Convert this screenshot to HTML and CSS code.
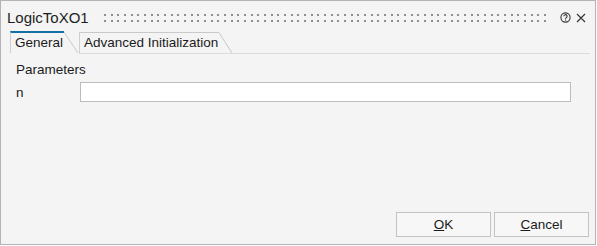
FILE: index.html
```html
<!DOCTYPE html>
<html>
<head>
<meta charset="utf-8">
<link rel="stylesheet" href="styles.css">
</head>
<body>
<div class="window">
  <div class="titlebar">
    <span class="title">LogicToXO1</span>
    <svg class="grip" height="8">
      <defs>
        <pattern id="dots" x="0" y="0" width="20" height="6" patternUnits="userSpaceOnUse">
          <rect x="0" y="0" width="2" height="2" fill="#8e8e8e"/>
          <rect x="7" y="0" width="2" height="2" fill="#8e8e8e"/>
          <rect x="13" y="0" width="2" height="2" fill="#8e8e8e"/>
        </pattern>
      </defs>
      <rect x="0" y="0" width="100%" height="8" fill="url(#dots)"/>
    </svg>
    <svg class="icon help" width="11" height="11" viewBox="0 0 11 11">
      <circle cx="5.5" cy="5.5" r="4.6" fill="none" stroke="#333" stroke-width="1.1"/>
      <path d="M3.9 4.3 a1.6 1.6 0 1 1 2.3 1.4 c-0.5 0.25 -0.7 0.55 -0.7 1.1" fill="none" stroke="#333" stroke-width="1.1"/>
      <rect x="5" y="7.5" width="1.1" height="1.1" fill="#333"/>
    </svg>
    <svg class="icon close" width="10" height="10" viewBox="0 0 10 10">
      <path d="M1 1 L9 9 M9 1 L1 9" stroke="#333" stroke-width="1.1" fill="none"/>
    </svg>
  </div>
  <div class="tabs">
    <div class="tab active">
      <span class="tab-label">General</span>
      <svg class="slant" width="14" height="22" viewBox="0 0 14 22"><line x1="0" y1="1" x2="14" y2="22" stroke="#c9c9c9" stroke-width="1"/></svg>
    </div>
    <div class="tab">
      <span class="tab-label">Advanced Initialization</span>
      <svg class="slant" width="13" height="21" viewBox="0 0 13 21"><line x1="0" y1="0.5" x2="13" y2="21" stroke="#c9c9c9" stroke-width="1"/></svg>
    </div>
    <div class="tab-fill"></div>
  </div>
  <div class="content">
    <div class="section">Parameters</div>
    <div class="row">
      <span class="label">n</span>
      <input class="field" type="text">
    </div>
  </div>
  <div class="buttons">
    <button class="btn"><u>O</u>K</button>
    <button class="btn"><u>C</u>ancel</button>
  </div>
</div>
</body>
</html>
```
FILE: styles.css
```css
html, body {
  margin: 0;
  padding: 0;
  background: #ffffff;
}
body {
  font-family: "Liberation Sans", Arial, sans-serif;
  font-size: 13px;
  color: #1b1b1b;
}
.window {
  box-sizing: border-box;
  width: 596px;
  height: 245px;
  border: 1px solid #b4b4b4;
  background: #f4f4f4;
  display: flex;
  flex-direction: column;
}
.titlebar {
  height: 30px;
  display: flex;
  align-items: center;
  padding-left: 6px;
  padding-right: 9px;
}
.title {
  font-size: 15px;
  color: #1e1e1e;
  padding-top: 3px;
}
.grip {
  flex: 1;
  margin-left: 15px;
  margin-right: 9px;
  margin-top: 3px;
  height: 8px;
}
.icon {
  display: block;
  flex: none;
}
.help {
  margin-top: 3px;
}
.close {
  margin-left: 5px;
  margin-top: 4px;
}
.tabs {
  display: flex;
  align-items: flex-end;
  height: 23px;
  padding-left: 9px;
}
.tab {
  display: flex;
  align-items: stretch;
  box-sizing: border-box;
}
.tab-label {
  box-sizing: border-box;
  border-left: 1px solid #cfcfcf;
  border-top: 1px solid #c9c9c9;
  padding: 0 0 0 4px;
  line-height: 20px;
  font-size: 13.5px;
  white-space: nowrap;
}
.tab.active {
  height: 22px;
  align-self: flex-start;
}
.tab.active .tab-label {
  border-top: 2px solid #1570a6;
  width: 54px;
  line-height: 19px;
}
.tab:not(.active) {
  height: 22px;
  border-bottom: 1px solid #dcdcdc;
  margin-left: 1px;
}
.tab:not(.active) .tab-label {
  width: 140px;
}
.slant {
  display: block;
  flex: none;
}
.tab-fill {
  flex: 1;
  border-bottom: 1px solid #dcdcdc;
  margin-right: 5px;
}
.content {
  flex: 1;
  padding: 8px 24px 0 15px;
}
.section {
  line-height: 16px;
  font-size: 13.5px;
}
.row {
  display: flex;
  align-items: center;
  margin-top: 4px;
}
.label {
  width: 64px;
  font-size: 13.5px;
}
.field {
  flex: 1;
  box-sizing: border-box;
  height: 20px;
  margin: 0;
  border: 1px solid #bcbcbc;
  background: #ffffff;
  outline: none;
}
.buttons {
  display: flex;
  justify-content: flex-end;
  gap: 3px;
  padding: 0 6px 7px 0;
}
.btn {
  box-sizing: border-box;
  width: 95px;
  height: 25px;
  margin: 0;
  border: 1px solid #c3c3c3;
  border-radius: 0;
  background: #f7f7f7;
  font-family: "Liberation Sans", Arial, sans-serif;
  font-size: 13.5px;
  color: #1b1b1b;
  padding: 0;
}
```
